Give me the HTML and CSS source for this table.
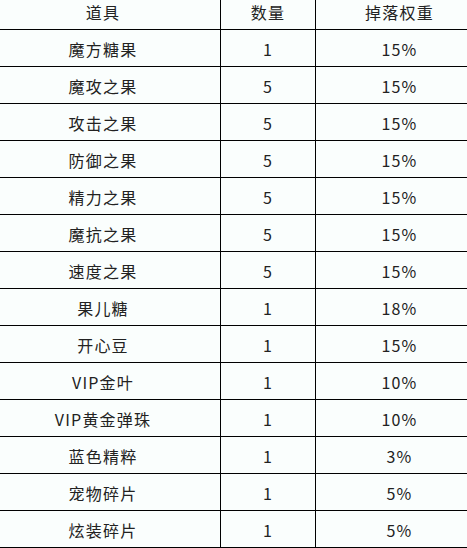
FILE: index.html
```html
<!DOCTYPE html>
<html lang="zh">
<head>
<meta charset="utf-8">
<link rel="stylesheet" href="styles.css">
</head>
<body>
<table class="drop-table">
  <colgroup>
    <col class="c-item">
    <col class="c-qty">
    <col class="c-rate">
  </colgroup>
  <thead>
    <tr><th>道具</th><th>数量</th><th>掉落权重</th></tr>
  </thead>
  <tbody>
    <tr><td>魔方糖果</td><td>1</td><td>15%</td></tr>
    <tr><td>魔攻之果</td><td>5</td><td>15%</td></tr>
    <tr><td>攻击之果</td><td>5</td><td>15%</td></tr>
    <tr><td>防御之果</td><td>5</td><td>15%</td></tr>
    <tr><td>精力之果</td><td>5</td><td>15%</td></tr>
    <tr><td>魔抗之果</td><td>5</td><td>15%</td></tr>
    <tr><td>速度之果</td><td>5</td><td>15%</td></tr>
    <tr><td>果儿糖</td><td>1</td><td>18%</td></tr>
    <tr><td>开心豆</td><td>1</td><td>15%</td></tr>
    <tr><td>VIP金叶</td><td>1</td><td>10%</td></tr>
    <tr><td>VIP黄金弹珠</td><td>1</td><td>10%</td></tr>
    <tr><td>蓝色精粹</td><td>1</td><td>3%</td></tr>
    <tr><td>宠物碎片</td><td>1</td><td>5%</td></tr>
    <tr><td>炫装碎片</td><td>1</td><td>5%</td></tr>
  </tbody>
</table>
</body>
</html>
```
FILE: styles.css
```css
html, body {
  margin: 0;
  padding: 0;
  background: #fafefd;
  overflow: hidden;
}
.drop-table {
  border-collapse: collapse;
  table-layout: fixed;
  width: 498px;
  margin: -8px 0 0 -15px;
  font-family: "Noto Sans CJK SC", "Noto Sans", sans-serif;
  font-size: 16px;
  font-weight: 400;
  color: #222;
  letter-spacing: 1.2px;
}
.c-item { width: 235px; }
.c-qty { width: 95px; }
.c-rate { width: 168px; }
.drop-table th,
.drop-table td {
  height: 36px;
  padding: 0;
  border: 1px solid #000;
  text-align: center;
  vertical-align: middle;
  font-weight: 400;
  line-height: 20px;
}
.drop-table th { padding-top: 2px; height: 34px; }
.drop-table td { padding-top: 2px; height: 34px; }
```
